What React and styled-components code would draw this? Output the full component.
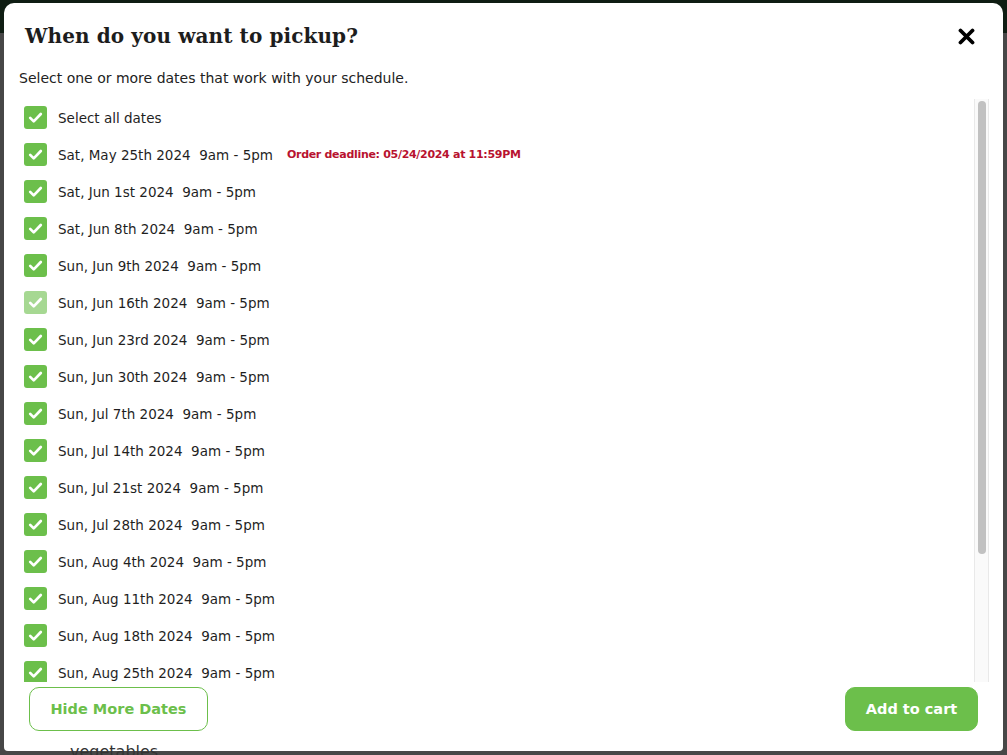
import React from "react";
import styled, { createGlobalStyle } from "styled-components";

const Global = createGlobalStyle`
  html, body { margin: 0; padding: 0; }
  body {
    background: #464646;
    font-family: "DejaVu Sans", "Noto Sans", sans-serif;
    overflow: hidden;
  }
`;

const Page = styled.div`
  position: relative;
  width: 1007px;
  height: 755px;
  box-sizing: border-box;
  padding: 3px 4px 4px 4px;
  display: flex;
  background: linear-gradient(#0f1d13 0 33px, #474747 33px);
  overflow: hidden;
`;

const BehindText = styled.div`
  position: absolute;
  left: 70px;
  top: 742px;
  font-size: 16px;
  color: #333;
  z-index: 2;
`;

const Modal = styled.div`
  flex: 1;
  display: flex;
  flex-direction: column;
  background: #ffffff;
  border-radius: 10px 10px 4px 4px;
  overflow: hidden;
`;

const Header = styled.div`
  display: flex;
  align-items: center;
  justify-content: space-between;
  padding: 19px 28px 0 21px;
  height: 28px;
`;

const Title = styled.h2`
  margin: 0;
  font-family: "DejaVu Serif", "Liberation Serif", serif;
  font-weight: bold;
  font-size: 20px;
  line-height: 28px;
  color: #1d1d1d;
  letter-spacing: 0.1px;
`;

const CloseButton = styled.button`
  border: 0;
  background: none;
  padding: 0;
  width: 17px;
  height: 17px;
  display: flex;
  cursor: pointer;
`;

const Subtitle = styled.p`
  margin: 18px 0 11px 15px;
  font-size: 14px;
  line-height: 20px;
  color: #222;
`;

const ListArea = styled.div`
  display: flex;
  height: 583px;
  margin-right: 14px;
`;

const Scroller = styled.div`
  flex: 1;
  overflow-y: auto;
  scrollbar-width: none;
  &::-webkit-scrollbar { display: none; }
`;

const Track = styled.div`
  width: 15px;
  flex: none;
  box-sizing: border-box;
  background: #fafafa;
  border-left: 1px solid #e9e9e9;
  border-right: 1px solid #e9e9e9;
  padding: 2px 2px 0 3px;
`;

const Thumb = styled.div`
  height: 453px;
  border-radius: 4px;
  background: #c1c1c1;
`;

const Row = styled.label`
  display: flex;
  align-items: center;
  gap: 11px;
  height: 37px;
  padding-left: 20px;
  font-size: 13.5px;
  color: #1f1f1f;
  white-space: pre;
  cursor: pointer;
`;

const Box = styled.span`
  width: 23px;
  height: 23px;
  flex: none;
  border-radius: 3px;
  background: #6cbf4b;
  opacity: ${(p) => (p.$faded ? 0.6 : 1)};
  display: flex;
  align-items: center;
  justify-content: center;
`;

const Deadline = styled.span`
  margin-left: 3px;
  font-size: 11px;
  letter-spacing: -0.3px;
  font-weight: bold;
  color: #b8122f;
`;

const Footer = styled.div`
  display: flex;
  justify-content: space-between;
  padding: 5px 25px 20px 25px;
`;

const Button = styled.button`
  height: 44px;
  box-sizing: border-box;
  border-radius: 10px;
  font-family: "DejaVu Sans", sans-serif;
  font-weight: bold;
  font-size: 14.5px;
  cursor: pointer;
  border: 1px solid #6cbf4b;
  background: ${(p) => (p.$filled ? "#6cbf4b" : "#fff")};
  color: ${(p) => (p.$filled ? "#fff" : "#6cbf4b")};
  width: ${(p) => p.$w}px;
`;

const Check = () => (
  <svg width="17" height="17" viewBox="0 0 24 24">
    <path d="M4.5 12.5l5 5L19.5 7" fill="none" stroke="#fff" strokeWidth="3.8" strokeLinecap="round" strokeLinejoin="round" />
  </svg>
);

const XIcon = () => (
  <svg width="17" height="17" viewBox="0 0 17 17">
    <path d="M2.5 2.5L14.5 14.5M14.5 2.5L2.5 14.5" stroke="#000" strokeWidth="3.8" strokeLinecap="round" />
  </svg>
);

const dates = [
  "Sat, May 25th 2024",
  "Sat, Jun 1st 2024",
  "Sat, Jun 8th 2024",
  "Sun, Jun 9th 2024",
  "Sun, Jun 16th 2024",
  "Sun, Jun 23rd 2024",
  "Sun, Jun 30th 2024",
  "Sun, Jul 7th 2024",
  "Sun, Jul 14th 2024",
  "Sun, Jul 21st 2024",
  "Sun, Jul 28th 2024",
  "Sun, Aug 4th 2024",
  "Sun, Aug 11th 2024",
  "Sun, Aug 18th 2024",
  "Sun, Aug 25th 2024",
  "Sun, Sep 1st 2024",
  "Sun, Sep 8th 2024",
  "Sun, Sep 15th 2024",
  "Sun, Sep 22nd 2024",
];

export default function App() {
  return (
    <Page>
      <Global />
      <Modal>
        <Header>
          <Title>When do you want to pickup?</Title>
          <CloseButton aria-label="Close">
            <XIcon />
          </CloseButton>
        </Header>
        <Subtitle>Select one or more dates that work with your schedule.</Subtitle>
        <ListArea>
          <Scroller>
            <Row>
              <Box><Check /></Box>
              Select all dates
            </Row>
            {dates.map((d, i) => (
              <Row key={d}>
                <Box $faded={i === 4}><Check /></Box>
                {d + "  9am - 5pm"}
                {i === 0 && <Deadline>Order deadline: 05/24/2024 at 11:59PM</Deadline>}
              </Row>
            ))}
          </Scroller>
          <Track>
            <Thumb />
          </Track>
        </ListArea>
        <Footer>
          <Button $w={179}>Hide More Dates</Button>
          <Button $filled $w={133}>Add to cart</Button>
        </Footer>
      </Modal>
      <BehindText>vegetables</BehindText>
    </Page>
  );
}
